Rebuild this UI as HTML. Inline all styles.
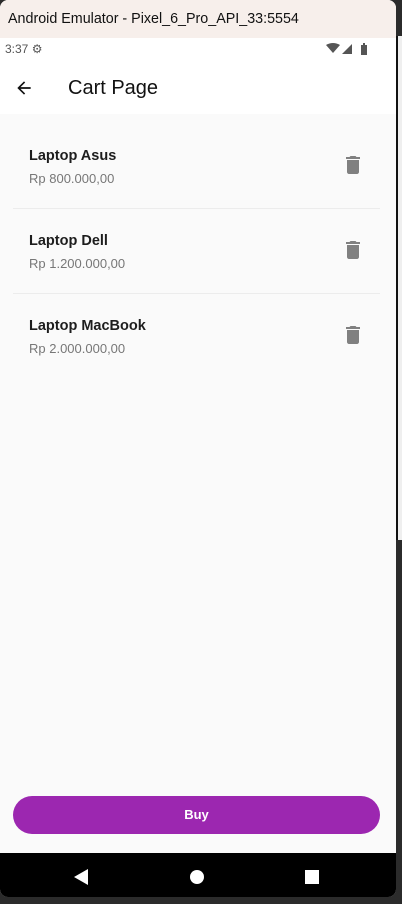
<!DOCTYPE html>
<html><head><style>
*{margin:0;padding:0;box-sizing:border-box}
body{width:402px;height:904px;background:#2b2b2b;font-family:"Liberation Sans",sans-serif;position:relative;overflow:hidden}
.strip{position:absolute;left:396px;top:36px;width:6px;height:504px;background:#efefef;border-left:2px solid #111}
.phone{position:absolute;left:0;top:0;width:396px;height:897px;background:#fafafa;border-radius:8px;overflow:hidden}
.tb{height:38px;background:#f7efeb;font-size:14.3px;color:#111;padding:11px 0 0 8px}
.sb{height:24px;background:#fff;font-size:12px;color:#555;padding:4px 0 0 5px;position:relative}
.ab{height:52px;background:#fff;position:relative}
.ab .t{position:absolute;left:68px;top:15px;font-size:20px;color:#111}
.item{position:absolute;left:0;width:396px;height:85px}
.name{position:absolute;left:29px;top:10px;font-size:14.5px;color:#1d1d1d;font-weight:bold}
.price{position:absolute;left:29px;top:33px;font-size:13px;color:#777}
.trash{position:absolute;left:341px;top:15px}
.div{position:absolute;left:13px;width:367px;height:1px;background:#ececec}
.btn{position:absolute;left:13px;top:796px;width:367px;height:38px;background:#9c27b0;border-radius:19px;color:#fff;font-size:13px;font-weight:bold;text-align:center;line-height:38px}
.nav{position:absolute;left:0;top:853px;width:396px;height:44px;background:#000}
</style></head><body>
<div class="strip"></div>
<div class="phone">
<div class="tb">Android Emulator - Pixel_6_Pro_API_33:5554</div>
<div class="sb">3:37 <span style="font-size:12px">⚙</span>
<svg style="position:absolute;left:326px;top:5px" width="44" height="12"><path d="M0 2 Q7 -2 14 2 L7 10Z" fill="#555"/><path d="M16 11 L26 1 L26 11Z" fill="#555"/><rect x="35" y="2" width="6" height="10" fill="#555"/><rect x="37" y="0" width="2" height="2" fill="#555"/></svg></div>
<div class="ab"><svg style="position:absolute;left:14px;top:16px" width="20" height="20" viewBox="0 0 24 24"><path d="M20 11H7.83l5.59-5.59L12 4l-8 8 8 8 1.41-1.41L7.83 13H20v-2z" fill="#111"/></svg><div class="t">Cart Page</div></div>
<div class="item" style="top:138px"><div class="name">Laptop Asus</div><div class="price">Rp 800.000,00</div><svg class="trash" width="24" height="24" viewBox="0 0 24 24"><path d="M6 19c0 1.1.9 2 2 2h8c1.1 0 2-.9 2-2V7H6v12zM19 4h-3.5l-1-1h-5l-1 1H5v2h14V4z" fill="#808080"/></svg></div>
<div class="div" style="top:208px"></div>
<div class="item" style="top:223px"><div class="name">Laptop Dell</div><div class="price">Rp 1.200.000,00</div><svg class="trash" width="24" height="24" viewBox="0 0 24 24"><path d="M6 19c0 1.1.9 2 2 2h8c1.1 0 2-.9 2-2V7H6v12zM19 4h-3.5l-1-1h-5l-1 1H5v2h14V4z" fill="#808080"/></svg></div>
<div class="div" style="top:293px"></div>
<div class="item" style="top:308px"><div class="name">Laptop MacBook</div><div class="price">Rp 2.000.000,00</div><svg class="trash" width="24" height="24" viewBox="0 0 24 24"><path d="M6 19c0 1.1.9 2 2 2h8c1.1 0 2-.9 2-2V7H6v12zM19 4h-3.5l-1-1h-5l-1 1H5v2h14V4z" fill="#808080"/></svg></div>
<div class="btn">Buy</div>
<div class="nav"><svg width="396" height="44"><path d="M74 24 L88 16 L88 32Z" fill="#fff"/><circle cx="197" cy="24" r="7" fill="#fff"/><rect x="305" y="17" width="14" height="14" fill="#fff"/></svg></div>
</div>
</body></html>
